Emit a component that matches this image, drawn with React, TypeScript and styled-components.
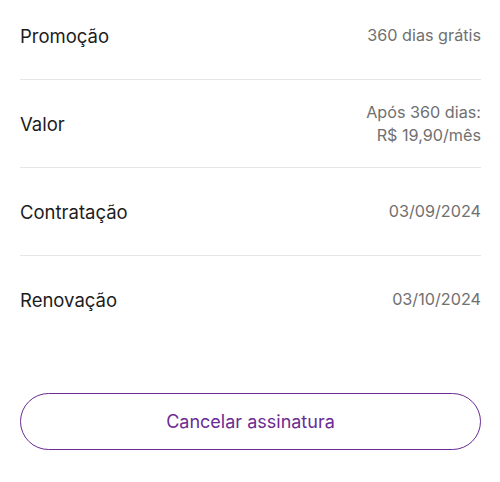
import React from 'react';
import styled, { createGlobalStyle } from 'styled-components';

const GlobalStyle = createGlobalStyle`
  html, body {
    margin: 0;
    padding: 0;
    background: #ffffff;
  }
  body {
    font-family: 'Inter', 'Noto Sans', sans-serif;
    -webkit-font-smoothing: antialiased;
  }
`;

const Page = styled.div`
  width: 500px;
  height: 482px;
  overflow: hidden;
  box-sizing: border-box;
  padding: 0 19px 0 20px;
`;

const List = styled.div`
  display: flex;
  flex-direction: column;
  margin-top: -8px;
`;

const Row = styled.div<{ $last?: boolean }>`
  display: flex;
  align-items: center;
  justify-content: space-between;
  height: 87px;
  border-bottom: 1px solid ${(p) => (p.$last ? 'transparent' : '#e6e6e6')};
`;

const Label = styled.span`
  font-size: 18.5px;
  color: #1c1c1c;
`;

const Value = styled.span`
  font-size: 16.2px;
  line-height: 23px;
  color: #707070;
  text-align: right;
`;

const Actions = styled.div`
  padding-top: 49px;
`;

const OutlineButton = styled.button`
  width: 100%;
  height: 57px;
  border: 1.5px solid #6b2b93;
  border-radius: 29px;
  background: #ffffff;
  color: #6b2b93;
  font-family: inherit;
  font-size: 18px;
  cursor: pointer;
`;

const rows = [
  { label: 'Promoção', value: ['360 dias grátis'] },
  { label: 'Valor', value: ['Após 360 dias:', 'R$ 19,90/mês'] },
  { label: 'Contratação', value: ['03/09/2024'] },
  { label: 'Renovação', value: ['03/10/2024'] },
];

export default function App() {
  return (
    <>
      <GlobalStyle />
      <Page>
        <List>
          {rows.map((r, i) => (
            <Row key={r.label} $last={i === rows.length - 1}>
              <Label>{r.label}</Label>
              <Value>
                {r.value.map((v) => (
                  <div key={v}>{v}</div>
                ))}
              </Value>
            </Row>
          ))}
        </List>
        <Actions>
          <OutlineButton>Cancelar assinatura</OutlineButton>
        </Actions>
      </Page>
    </>
  );
}
